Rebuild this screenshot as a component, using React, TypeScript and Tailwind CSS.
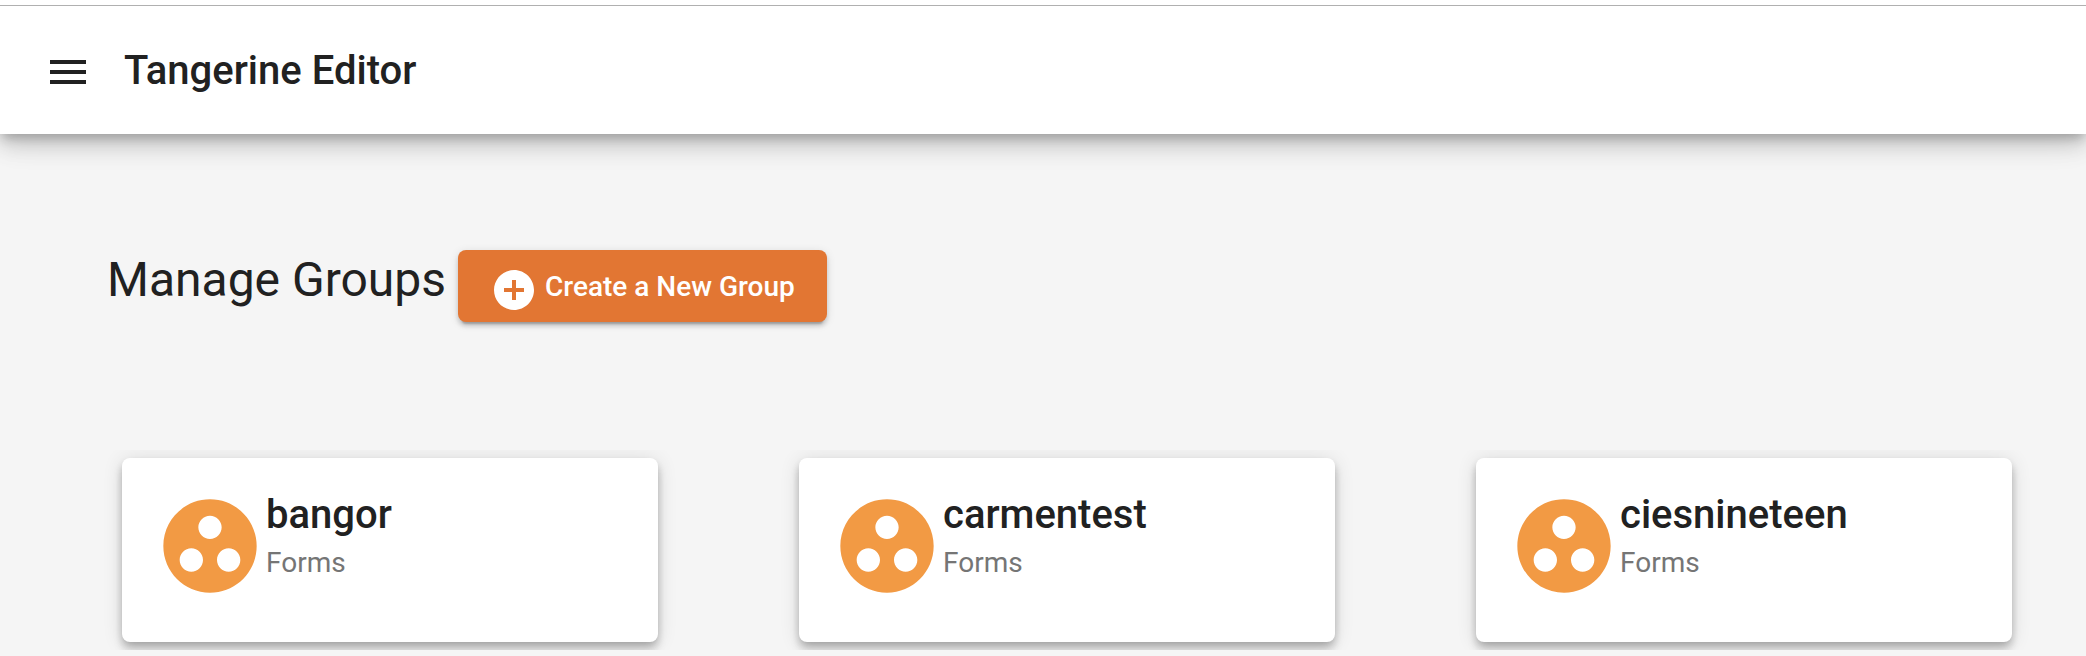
import React from "react";

const groups = ["bangor", "carmentest", "ciesnineteen"];

function MenuIcon() {
  return (
    <svg viewBox="0 0 24 24" className="size-12" fill="currentColor" aria-hidden="true">
      <path d="M3 18h18v-2H3v2zm0-5h18v-2H3v2zm0-7v2h18V6H3z" />
    </svg>
  );
}

function AddCircleIcon() {
  return (
    <svg viewBox="0 0 24 24" className="size-12" fill="currentColor" aria-hidden="true">
      <path d="M12 2C6.48 2 2 6.48 2 12s4.48 10 10 10 10-4.48 10-10S17.52 2 12 2zm5 11h-4v4h-2v-4H7v-2h4V7h2v4h4v2z" />
    </svg>
  );
}

function GroupWorkIcon() {
  return (
    <svg viewBox="0 0 24 24" className="size-28 shrink-0 text-[#f29a44]" fill="currentColor" aria-hidden="true">
      <path d="M12 2C6.48 2 2 6.48 2 12s4.48 10 10 10 10-4.48 10-10S17.52 2 12 2zM8 17.5c-1.38 0-2.5-1.12-2.5-2.5s1.12-2.5 2.5-2.5 2.5 1.12 2.5 2.5-1.12 2.5-2.5 2.5zM9.5 8c0-1.38 1.12-2.5 2.5-2.5s2.5 1.12 2.5 2.5-1.12 2.5-2.5 2.5S9.5 9.38 9.5 8zm6.5 9.5c-1.38 0-2.5-1.12-2.5-2.5s1.12-2.5 2.5-2.5 2.5 1.12 2.5 2.5-1.12 2.5-2.5 2.5z" />
    </svg>
  );
}

function GroupCard({ name }: { name: string }) {
  return (
    <a
      href="#"
      className="flex rounded-lg bg-white px-8 pt-8 pb-10 shadow-[0_4px_8px_-2px_rgba(0,0,0,0.2),0_8px_10px_0_rgba(0,0,0,0.14),0_2px_20px_0_rgba(0,0,0,0.12)]"
    >
      <GroupWorkIcon />
      <div className="pt-px">
        <h2 className="text-[40px] leading-12 font-medium">{name}</h2>
        <p className="text-[28px] leading-12 text-[#757575]">Forms</p>
      </div>
    </a>
  );
}

export default function App() {
  return (
    <div className="min-h-screen overflow-hidden bg-[#f5f5f5] font-['Roboto',sans-serif] text-[#212121]">
      <div className="bg-white pt-[5px] shadow-[0_6px_10px_-2px_rgba(0,0,0,0.2),0_12px_20px_0_rgba(0,0,0,0.14),0_2px_36px_0_rgba(0,0,0,0.12)]">
        <header className="flex h-[129px] items-center gap-8 border-t border-[#b0b0b0] px-11 pt-1">
          <button type="button" aria-label="Menu">
            <MenuIcon />
          </button>
          <h1 className="pb-0.5 text-[40px] leading-12 font-medium">Tangerine Editor</h1>
        </header>
      </div>
      <main>
        <div className="flex items-start gap-3 px-[107px] pt-29">
          <h2 className="text-[48px] leading-[60px]">Manage Groups</h2>
          <button
            type="button"
            className="flex h-18 items-center gap-[7px] rounded-lg bg-[#e27633] px-8 pt-0.5 text-[28px] font-medium text-white shadow-[0_6px_2px_-4px_rgba(0,0,0,0.2),0_4px_4px_0_rgba(0,0,0,0.14),0_2px_10px_0_rgba(0,0,0,0.12)]"
          >
            <span className="pt-1.5">
              <AddCircleIcon />
            </span>
            Create a New Group
          </button>
        </div>
        <div className="mt-32 grid grid-cols-3 gap-x-[141px] overflow-hidden pt-2 pr-[74px] pb-2 pl-[122px]">
          {groups.map((name) => (
            <GroupCard key={name} name={name} />
          ))}
        </div>
      </main>
    </div>
  );
}
